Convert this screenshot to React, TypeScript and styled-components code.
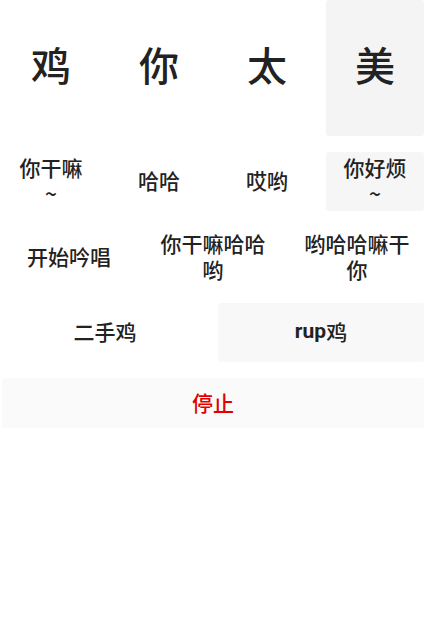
import React from "react";
import styled, { createGlobalStyle } from "styled-components";

const Global = createGlobalStyle`
  html, body { margin: 0; padding: 0; background: #fff; }
  body { font-family: "Noto Sans CJK SC", "Noto Sans", sans-serif; color: #222; }
`;

const Page = styled.div`
  display: flex;
  flex-direction: column;
  gap: 16px;
  padding: 0 3px 0 2px;
`;

const Grid = styled.div<{ $cols: number; $h: number }>`
  display: grid;
  grid-template-columns: repeat(${(p) => p.$cols}, 1fr);
  column-gap: 10px;
  height: ${(p) => p.$h}px;
`;

const Cell = styled.div<{ $bg?: string; $size?: number; $color?: string; $pad?: number }>`
  display: flex;
  align-items: center;
  justify-content: center;
  text-align: center;
  background: ${(p) => p.$bg || "transparent"};
  border-radius: 3px;
  font-size: ${(p) => p.$size || 21}px;
  font-weight: 500;
  color: ${(p) => p.$color || "#222"};
  line-height: ${(p) => ((p.$size || 21) > 30 ? 48 : 26)}px;
  padding: 0 ${(p) => p.$pad ?? 15}px ${(p) => ((p.$size || 21) > 30 ? 8 : 3)}px;
  word-break: break-all;
`;

const Latin = styled.span`
  font-family: Roboto, "Liberation Sans", sans-serif;
  font-weight: 700;
`;

export default function App() {
  return (
    <>
      <Global />
      <Page>
        <Grid $cols={4} $h={136}>
          <Cell $size={40}>鸡</Cell>
          <Cell $size={40}>你</Cell>
          <Cell $size={40}>太</Cell>
          <Cell $size={40} $bg="#f4f4f4">美</Cell>
        </Grid>
        <Grid $cols={4} $h={59}>
          <Cell>你干嘛~</Cell>
          <Cell>哈哈</Cell>
          <Cell>哎哟</Cell>
          <Cell $bg="#f6f6f6">你好烦~</Cell>
        </Grid>
        <Grid $cols={3} $h={60}>
          <Cell $pad={10}>开始吟唱</Cell>
          <Cell $pad={10}>你干嘛哈哈哟</Cell>
          <Cell $pad={10}>哟哈哈嘛干你</Cell>
        </Grid>
        <Grid $cols={2} $h={59}>
          <Cell>二手鸡</Cell>
          <Cell $bg="#f8f8f8">
            <Latin>rup</Latin>鸡
          </Cell>
        </Grid>
        <Grid $cols={1} $h={50}>
          <Cell $bg="#fafafa" $color="#e00000">停止</Cell>
        </Grid>
      </Page>
    </>
  );
}
